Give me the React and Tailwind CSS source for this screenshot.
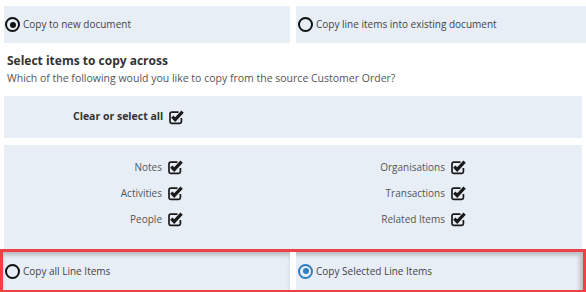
import React from 'react';

const font = { fontFamily: '"Open Sans", "Liberation Sans", sans-serif' };

function Radio({ checked, blue }) {
    const color = blue ? 'border-[#2f7fc1]' : 'border-[#111]';
    const dot = blue ? 'bg-[#2f7fc1]' : 'bg-[#111]';
    return (
        <span className={`inline-flex items-center justify-center w-[15px] h-[15px] rounded-full border-[2.5px] ${color} shrink-0`}>
            {checked && <span className={`w-[6px] h-[6px] rounded-full ${dot}`} />}
        </span>
    );
}

function CheckIcon() {
    return (
        <svg width="16" height="16" viewBox="0 0 16 16" className="shrink-0">
            <path
                d="M10.5 3.2 H3.6 a1.6 1.6 0 0 0 -1.6 1.6 V12.8 a1.6 1.6 0 0 0 1.6 1.6 H11.8 a1.6 1.6 0 0 0 1.6 -1.6 V9"
                fill="none"
                stroke="#1a1a1a"
                strokeWidth="1.7"
            />
            <polyline points="4.3,7.6 7.2,10.6 14.6,2.6" fill="none" stroke="#1a1a1a" strokeWidth="3.2" />
        </svg>
    );
}

function Item({ label }) {
    return (
        <div className="flex items-center justify-end gap-[5px] h-[26px]">
            <span className="text-[10px] text-[#555]">{label}</span>
            <CheckIcon />
        </div>
    );
}

export default function App() {
    return (
        <div className="w-[586px] h-[292px] bg-white overflow-hidden" style={font}>
            <div className="grid grid-cols-2 gap-[6px] px-[4px] pt-[6px]">
                <div className="h-[37px] bg-[#e8eef6] flex items-center gap-[3px] pl-[1px]">
                    <Radio checked />
                    <span className="text-[10px] text-[#444]">Copy to new document</span>
                </div>
                <div className="h-[37px] bg-[#e8eef6] flex items-center gap-[3px] pl-[2px] mr-[-4px]">
                    <Radio />
                    <span className="text-[10px] text-[#444]">Copy line items into existing document</span>
                </div>
            </div>

            <div className="px-[7px] pt-[9px]">
                <h3 className="text-[12px] font-bold text-[#333] leading-[18px]">Select items to copy across</h3>
                <p className="text-[10.5px] text-[#555] leading-[15px] mt-[1px]">
                    Which of the following would you like to copy from the source Customer Order?
                </p>
            </div>

            <div className="mx-[4px] mt-[10px] h-[42px] bg-[#e8eef6] flex items-center pl-[69px] gap-[5px]">
                <span className="text-[10.5px] font-bold text-[#333]">Clear or select all</span>
                <CheckIcon />
            </div>

            <div className="mx-[4px] mt-[7px] h-[104px] bg-[#e8eef6] grid grid-cols-2 pt-[9px]">
                <div className="flex flex-col pr-[110px]">
                    <Item label="Notes" />
                    <Item label="Activities" />
                    <Item label="People" />
                </div>
                <div className="flex flex-col pr-[116px]">
                    <Item label="Organisations" />
                    <Item label="Transactions" />
                    <Item label="Related Items" />
                </div>
            </div>

            <div className="border-[3px] border-[#ef4045] h-[44px] bg-white grid grid-cols-[287px_1fr] gap-[6px]">
                <div className="bg-[#e8eef6] flex items-center gap-[3px] pl-[2px] shadow-[inset_0_4px_4px_-1px_rgba(0,0,0,0.22)]">
                    <Radio />
                    <span className="text-[10px] text-[#444]">Copy all Line Items</span>
                </div>
                <div className="bg-[#e8eef6] flex items-center gap-[3px] pl-[2px] shadow-[inset_-4px_4px_4px_-1px_rgba(0,0,0,0.22)]">
                    <Radio checked blue />
                    <span className="text-[10px] text-[#444]">Copy Selected Line Items</span>
                </div>
            </div>
        </div>
    );
}
